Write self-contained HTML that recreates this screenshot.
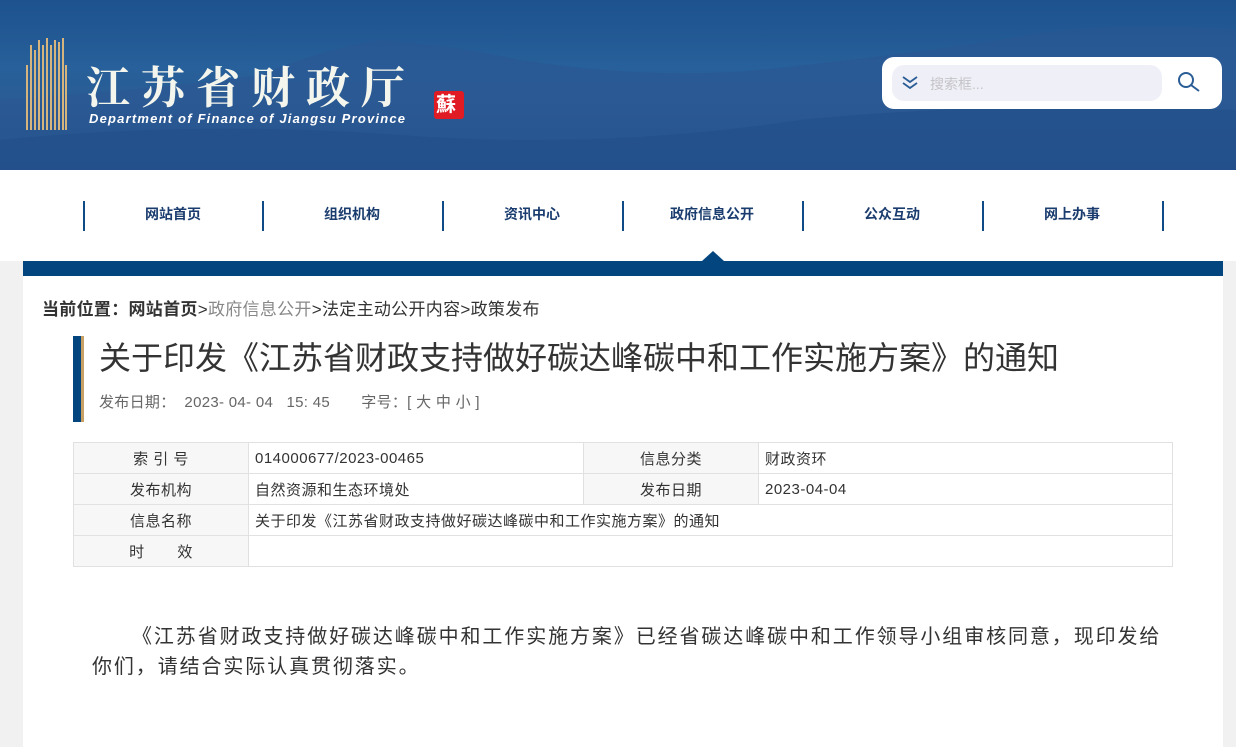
<!DOCTYPE html>
<html><head><meta charset="utf-8"><style>
*{margin:0;padding:0;box-sizing:border-box}
body{width:1236px;height:747px;overflow:hidden;background:#f1f1f1;font-family:"Liberation Sans","Noto Sans CJK SC",sans-serif;position:relative}
.hd{position:absolute;left:0;top:0;width:1236px;height:170px;background:linear-gradient(180deg,#1d528e 0%,#27609a 40%,#2a5c94 60%,#1f4e86 100%);overflow:hidden}
.nav{position:absolute;left:0;top:170px;width:1236px;height:91px;background:#fff}
.nav .d{position:absolute;top:31px;width:2px;height:30px;background:#0e4a85}
.nav .t{position:absolute;top:34px;width:178px;text-align:center;font-size:14px;font-weight:bold;color:#1a3c6e}
.bar{position:absolute;left:23px;top:261px;width:1200px;height:15px;background:#02457f}
.main{position:absolute;left:23px;top:276px;width:1200px;height:471px;background:#fff}
td{border:1px solid #e1e1e1;font-size:15px;color:#333;height:31px;padding:0 6px;letter-spacing:.5px}
td.l{background:#f7f7f7;text-align:center}
</style></head><body>
<div class="hd">
<svg width="1236" height="170" style="position:absolute;left:0;top:0">
<path d="M0 100 Q150 90 260 75 Q320 50 380 40 Q450 45 520 60 Q650 80 760 70 Q900 55 1000 40 Q1100 20 1236 30 L1236 170 L0 170Z" fill="#2b5792" opacity=".6"/>
<path d="M0 140 Q200 120 400 135 Q600 150 800 120 Q1000 100 1236 110 L1236 170 L0 170Z" fill="#22508a" opacity=".7"/>
<g stroke="#d6b47d" stroke-width="2">
<line x1="27" y1="65" x2="27" y2="130"/><line x1="31" y1="45" x2="31" y2="130"/><line x1="35" y1="50" x2="35" y2="130"/><line x1="39" y1="40" x2="39" y2="130"/><line x1="43" y1="45" x2="43" y2="130"/><line x1="47" y1="38" x2="47" y2="130"/><line x1="51" y1="45" x2="51" y2="130"/><line x1="55" y1="40" x2="55" y2="130"/><line x1="59" y1="42" x2="59" y2="130"/><line x1="63" y1="38" x2="63" y2="130"/><line x1="66" y1="65" x2="66" y2="130"/>
</g>
<rect x="434" y="91" width="30" height="28" rx="3" fill="#e01b24"/>
</svg>
<div style="position:absolute;left:86px;top:56px;font-family:'Noto Serif CJK SC',serif;font-size:44px;font-weight:bold;color:#f4f6ee;letter-spacing:11px;line-height:56px">江苏省财政厅</div>
<div style="position:absolute;left:89px;top:111px;font-size:13px;font-weight:bold;font-style:italic;color:#fff;letter-spacing:1.2px">Department of Finance of Jiangsu Province</div>
<div style="position:absolute;left:436px;top:93px;font-size:20px;color:#fff;font-weight:bold;line-height:24px">蘇</div>
<div style="position:absolute;left:882px;top:57px;width:340px;height:52px;background:#fff;border-radius:12px">
<div style="position:absolute;left:10px;top:8px;width:270px;height:36px;background:#efeff7;border-radius:12px">
<svg width="20" height="20" style="position:absolute;left:8px;top:8px" fill="none" stroke="#2a5d96" stroke-width="1.8"><path d="M3 4l7 5 7-5M3 10l7 5 7-5"/></svg>
<span style="position:absolute;left:38px;top:9px;font-size:14px;color:#c4c4c8">搜索框...</span></div>
<svg width="26" height="26" style="position:absolute;left:294px;top:13px" fill="none" stroke="#2a5d96" stroke-width="2"><circle cx="10" cy="10" r="7"/><path d="M15 15l8 6"/></svg>
</div>
</div>
<div class="nav">
<div class="d" style="left:83px"></div><div class="d" style="left:262px"></div><div class="d" style="left:442px"></div><div class="d" style="left:622px"></div><div class="d" style="left:802px"></div><div class="d" style="left:982px"></div><div class="d" style="left:1162px"></div>
<div class="t" style="left:84px">网站首页</div><div class="t" style="left:263px">组织机构</div><div class="t" style="left:443px">资讯中心</div><div class="t" style="left:623px">政府信息公开</div><div class="t" style="left:803px">公众互动</div><div class="t" style="left:983px">网上办事</div>
<div style="position:absolute;left:702px;top:81px;width:0;height:0;border-left:11px solid transparent;border-right:11px solid transparent;border-bottom:10px solid #02457f"></div>
</div>
<div class="bar"></div>
<div class="main">
<div style="position:absolute;left:19px;top:19px;font-size:17px;color:#333;letter-spacing:.3px"><b>当前位置：网站首页</b>&gt;<span style="color:#888">政府信息公开</span>&gt;法定主动公开内容&gt;政策发布</div>
<div style="position:absolute;left:50px;top:60px;width:11px;height:86px;background:#02457f;border-right:3px solid #c9a063"></div>
<div style="position:absolute;left:76px;top:61px;font-size:32px;color:#333;line-height:42px;white-space:nowrap">关于印发《江苏省财政支持做好碳达峰碳中和工作实施方案》的通知</div>
<div style="position:absolute;left:76px;top:115px;font-size:15px;color:#666;white-space:pre;letter-spacing:.3px">发布日期：  2023- 04- 04   15: 45       字号：[ 大 中 小 ]</div>
<table style="position:absolute;left:50px;top:166px;width:1100px;border-collapse:collapse">
<tr><td class="l" style="width:175px">索 引 号</td><td style="width:335px">014000677/2023-00465</td><td class="l" style="width:175px">信息分类</td><td>财政资环</td></tr>
<tr><td class="l">发布机构</td><td>自然资源和生态环境处</td><td class="l">发布日期</td><td>2023-04-04</td></tr>
<tr><td class="l">信息名称</td><td colspan="3">关于印发《江苏省财政支持做好碳达峰碳中和工作实施方案》的通知</td></tr>
<tr><td class="l">时 &nbsp; &nbsp; &nbsp; 效</td><td colspan="3"></td></tr>
</table>
<div style="position:absolute;left:69px;top:346px;font-size:20px;color:#333;line-height:30px;white-space:nowrap;letter-spacing:1.9px"><span style="display:inline-block;width:40px"></span>《江苏省财政支持做好碳达峰碳中和工作实施方案》已经省碳达峰碳中和工作领导小组审核同意，现印发给<br>你们，请结合实际认真贯彻落实。</div>
</div>
</body></html>
